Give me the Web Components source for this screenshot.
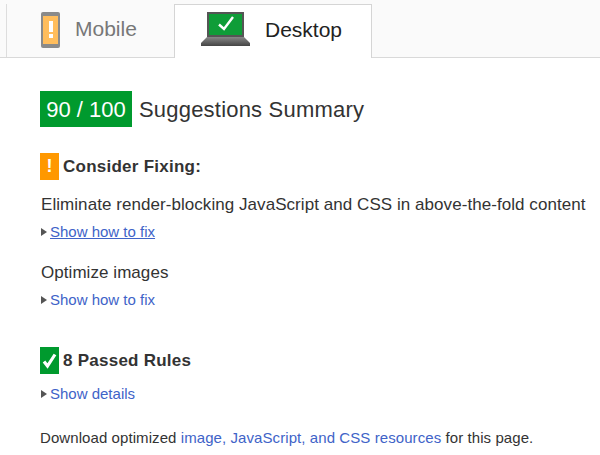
<!DOCTYPE html>
<html>
<head>
<meta charset="utf-8">
<title>PageSpeed</title>
<style>
html, body { margin: 0; padding: 0; background: #fff; }
body { font-family: "Liberation Sans", Arial, sans-serif; color: #333; width: 600px; height: 455px; overflow: hidden; }
</style>
</head>
<body>
<ps-tabs>
  <ps-tab>
    <svg slot="icon" width="22" height="37" viewBox="0 0 22 37">
      <rect x="1" y="0" width="19" height="36" rx="2" fill="#8a8a8a"/>
      <rect x="3" y="4" width="15" height="28" fill="#ffbd5c"/>
      <rect x="9" y="9" width="4" height="11" fill="#fff"/>
      <rect x="9" y="22" width="4" height="4" fill="#fff"/>
    </svg>
    Mobile
  </ps-tab>
  <ps-tab selected>
    <svg slot="icon" width="50" height="34" viewBox="0 0 50 34">
      <defs><linearGradient id="base" x1="0" y1="0" x2="0" y2="1"><stop offset="0" stop-color="#888"/><stop offset="1" stop-color="#444"/></linearGradient></defs>
      <rect x="6" y="0" width="37" height="25" fill="#555"/>
      <rect x="8" y="2" width="33" height="21" fill="#0f9d38"/>
      <path d="M18 12.5l5 4.5 9-12" fill="none" stroke="#fff" stroke-width="2.4"/>
      <path d="M6 25h37l6 6v3H0v-3z" fill="url(#base)"/>
    </svg>
    Desktop
  </ps-tab>
</ps-tabs>
<ps-report>
  <ps-summary score="90 / 100">Suggestions Summary</ps-summary>
  <ps-heading kind="warn">Consider Fixing:</ps-heading>
  <ps-rule link="Show how to fix" active style="--gap:15px">Eliminate render-blocking JavaScript and CSS in above-the-fold content</ps-rule>
  <ps-rule link="Show how to fix">Optimize images</ps-rule>
  <ps-heading kind="pass">8 Passed Rules</ps-heading>
  <ps-rule link="Show details" style="--gap:10px"></ps-rule>
  <ps-download></ps-download>
</ps-report>
<script>
customElements.define('ps-tabs', class extends HTMLElement {
    constructor() {
        super();
        this.attachShadow({ mode: 'open' }).innerHTML = `
        <style>
        :host {
            display: flex;
            box-sizing: border-box;
            height: 58px;
            padding: 4px 0 0 6px;
            background: #fafafa;
            border-bottom: 1px solid #d9d9d9;
        }
        </style>
        <slot></slot>`;
    }
});

customElements.define('ps-tab', class extends HTMLElement {
    constructor() {
        super();
        this.attachShadow({ mode: 'open' }).innerHTML = `
        <style>
        :host {
            display: flex;
            align-items: center;
            box-sizing: border-box;
            height: 53px;
            width: 168px;
            padding: 0 0 0 33px;
            gap: 13px;
            font-size: 21px;
            color: #777;
            border-left: 1px solid #ddd;
        }
        :host([selected]) {
            width: 198px;
            padding-left: 26px;
            gap: 14px;
            color: #222;
            background: #fff;
            border: 1px solid #d5d5d5;
            border-bottom: 0;
            height: 54px;
        }
        ::slotted(svg) { flex: none; }
        :host([selected]) ::slotted(svg) { margin-bottom: 5px; }
        slot:not([name]) { display: block; padding-bottom: 4px; }
        </style>
        <slot name="icon"></slot><slot></slot>`;
    }
});

customElements.define('ps-report', class extends HTMLElement {
    constructor() {
        super();
        this.attachShadow({ mode: 'open' }).innerHTML = `
        <style>
        :host {
            display: block;
            padding: 33px 0 0 40px;
        }
        </style>
        <slot></slot>`;
    }
});

customElements.define('ps-summary', class extends HTMLElement {
    constructor() {
        super();
        this.attachShadow({ mode: 'open' }).innerHTML = `
        <style>
        :host {
            display: flex;
            align-items: center;
            gap: 7px;
            height: 36px;
            font-size: 22px;
            letter-spacing: .2px;
            color: #333;
        }
        #score {
            box-sizing: border-box;
            width: 92px;
            height: 36px;
            line-height: 38px;
            text-align: center;
            background: #009a2e;
            color: #fff;
            letter-spacing: 0;
        }
        slot { display: block; padding-top: 2px; }
        </style>
        <span id="score"></span><slot></slot>`;
        this.shadowRoot.querySelector('#score').textContent = this.getAttribute('score');
    }
});

customElements.define('ps-heading', class extends HTMLElement {
    constructor() {
        super();
        this.attachShadow({ mode: 'open' }).innerHTML = `
        <style>
        :host {
            display: flex;
            align-items: center;
            gap: 4px;
            height: 27px;
            margin-top: 26px;
            font-size: 17px;
            letter-spacing: .25px;
            font-weight: bold;
            color: #333;
        }
        :host([kind="pass"]) { margin-top: 37px; }
        #badge {
            display: flex;
            align-items: center;
            justify-content: center;
            width: 19px;
            height: 27px;
            background: #ff9800;
            color: #fff;
            font-size: 18px;
        }
        :host([kind="pass"]) #badge { background: #009a2e; }
        </style>
        <span id="badge"></span><slot></slot>`;
        const pass = this.getAttribute('kind') === 'pass';
        this.shadowRoot.querySelector('#badge').innerHTML = pass
            ? '<svg width="15" height="19" viewBox="0 0 15 19"><path d="M2 10.5l3.5 4.5 7.5-11.5" fill="none" stroke="#fff" stroke-width="3.2"/></svg>'
            : '!';
    }
});

customElements.define('ps-rule', class extends HTMLElement {
    constructor() {
        super();
        this.attachShadow({ mode: 'open' }).innerHTML = `
        <style>
        :host {
            display: block;
            margin-top: var(--gap, 21px);
            font-size: 17px;
            letter-spacing: .057px;
            line-height: 20px;
            color: #333;
        }
        #title { display: block; margin-left: 1px; }
        #toggle {
            display: flex;
            align-items: center;
            margin-top: 7px;
            height: 20px;
            font-size: 15px;
            letter-spacing: 0;
            padding-left: 1px;
        }
        #arrow {
            width: 0;
            height: 0;
            margin-right: 3px;
            border-left: 6px solid #555;
            border-top: 4px solid transparent;
            border-bottom: 4px solid transparent;
        }
        a { color: #4063c8; text-decoration: none; }
        :host([active]) a { text-decoration: underline; }
        </style>
        <span id="title"><slot></slot></span>
        <div id="toggle"><span id="arrow"></span><a href="#"></a></div>`;
        this.shadowRoot.querySelector('a').textContent = this.getAttribute('link');
        if (!this.textContent.trim()) this.shadowRoot.querySelector('#title').style.display = 'none';
    }
});

customElements.define('ps-download', class extends HTMLElement {
    constructor() {
        super();
        this.attachShadow({ mode: 'open' }).innerHTML = `
        <style>
        :host {
            display: block;
            margin-top: 24px;
            font-size: 15px;
            letter-spacing: .08px;
            line-height: 20px;
            color: #333;
        }
        a { color: #4063c8; text-decoration: none; }
        </style>
        Download optimized <a href="#">image, JavaScript, and CSS resources</a> for this page.`;
    }
});
</script>
</body>
</html>
